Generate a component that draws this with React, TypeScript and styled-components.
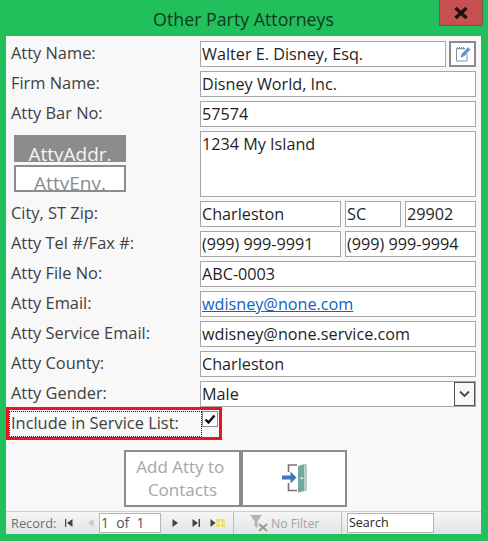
import styled, { createGlobalStyle } from 'styled-components';

const GlobalStyle = createGlobalStyle`
  html, body {
    margin: 0;
    padding: 0;
    background: #22c05c;
  }
  body {
    font-family: 'Open Sans', 'Noto Sans', sans-serif;
  }
`;

const Window = styled('div')`
  width: 488px;
  height: 541px;
  background: #22c05c;
  display: flex;
  flex-direction: column;
  box-sizing: border-box;
  padding: 0 7px 7px 6px;
`;

const TitleBar = styled('div')`
  position: relative;
  height: 36px;
  flex: none;
  display: flex;
  align-items: center;
  justify-content: center;
  padding-top: 2px;
  box-sizing: border-box;
  font-size: 17.8px;
  color: #0e3a1e;
`;

const CloseButton = styled('div')`
  position: absolute;
  top: 0;
  right: -2px;
  width: 44px;
  height: 26px;
  box-sizing: border-box;
  background: #c75050;
  border: 1px solid #6b5a4e;
  border-top: none;
  display: flex;
  align-items: center;
  justify-content: center;
`;

const Body = styled('div')`
  flex: 1;
  background: #f8f8f8;
  display: flex;
  flex-direction: column;
`;

const Form = styled('div')`
  flex: 1;
  display: flex;
  flex-direction: column;
  gap: 4px;
  padding: 5px 5px 0;
`;

const Row = styled('div')<{ $h?: number }>`
  position: relative;
  display: grid;
  grid-template-columns: 189px 1fr;
  height: ${(p) => p.$h ?? 26}px;
`;

const Label = styled('div')`
  font-size: 16.4px;
  line-height: 24px;
  color: #404040;
  white-space: nowrap;
`;

const FieldRow = styled('div')<{ $gap?: number }>`
  display: flex;
  gap: ${(p) => p.$gap ?? 4}px;
  min-width: 0;
`;

const Field = styled('div')<{ $w?: number }>`
  box-sizing: border-box;
  height: 100%;
  flex: ${(p) => (p.$w ? `0 0 ${p.$w}px` : '1')};
  background: #fff;
  border: 1px solid #a6a6a6;
  padding: 0 1px;
  font-size: 16.2px;
  line-height: 24px;
  color: #1f1f1f;
  white-space: nowrap;
  overflow: hidden;
  position: relative;
`;

const MailLink = styled('a')`
  color: #0b63c5;
  text-decoration: underline;
`;

const NoteButton = styled('div')`
  flex: 0 0 27px;
  height: 26px;
  box-sizing: border-box;
  border: 2px solid #8c8c8c;
  background: #fff;
  display: flex;
  align-items: center;
  justify-content: center;
`;

const AddressButtons = styled('div')`
  display: flex;
  flex-direction: column;
  gap: 3px;
  padding: 4px 0 0 3px;
`;

const AddrButton = styled('div')<{ $filled?: boolean }>`
  box-sizing: border-box;
  width: 112px;
  height: 27px;
  overflow: hidden;
  text-align: center;
  font-size: 19px;
  line-height: ${(p) => (p.$filled ? 38 : 33)}px;
  background: ${(p) => (p.$filled ? '#8c8c8c' : '#fff')};
  color: ${(p) => (p.$filled ? '#f4f4f4' : '#8c8c8c')};
  border: ${(p) => (p.$filled ? 'none' : '2px solid #8c8c8c')};
`;

const SelectArrow = styled('div')`
  position: absolute;
  top: 0;
  right: 0;
  width: 21px;
  height: 24px;
  box-sizing: border-box;
  border: 1px solid #555;
  background: #f8f8f8;
  display: flex;
  align-items: center;
  justify-content: center;
`;

const ServiceGrid = styled('div')`
  display: grid;
  grid-template-columns: 191px 1fr;
  grid-column: 1 / -1;
`;

const FocusLabel = styled(Label)`
  margin-left: -2px;
  padding-left: 2px;
  outline: 1px dotted #222;
  outline-offset: -1px;
`;

const CheckBox = styled('div')`
  box-sizing: border-box;
  width: 16px;
  height: 16px;
  border: 1px solid #8c8c8c;
  background: #fff;
  display: flex;
  align-items: center;
  justify-content: center;
`;

const RedMark = styled('div')`
  position: absolute;
  top: -4px;
  left: -5px;
  width: 216px;
  height: 33px;
  box-sizing: border-box;
  border: 3px solid #e8141e;
  pointer-events: none;
`;

const ActionBar = styled('div')`
  display: flex;
  padding: 0 0 4px 118px;
  flex: none;
`;

const ActionButton = styled('div')<{ $w: number }>`
  box-sizing: border-box;
  width: ${(p) => p.$w}px;
  height: 57px;
  border: 2px solid #8c8c8c;
  background: #fff;
  color: #a6a6a6;
  font-size: 17px;
  line-height: 23px;
  text-align: center;
  display: flex;
  align-items: center;
  justify-content: center;
  padding-bottom: 2px;
`;

const NavBar = styled('div')`
  flex: none;
  height: 23px;
  box-sizing: border-box;
  border-top: 1px solid #cfcfcf;
  background: linear-gradient(#f6f6f6, #e2e3e5);
  display: flex;
  align-items: center;
  font-size: 12.8px;
  color: #6e6e6e;
`;

const RecordLabel = styled('span')`
  margin-left: 5px;
  width: 54px;
`;

const NavIcon = styled('svg')<{ $left?: number; $right?: number }>`
  flex: none;
  margin-left: ${(p) => p.$left ?? 0}px;
  margin-right: ${(p) => p.$right ?? 0}px;
`;

const NavInput = styled('div')<{ $w: number; $left?: number }>`
  box-sizing: border-box;
  width: ${(p) => p.$w}px;
  height: 20px;
  margin-left: ${(p) => p.$left ?? 0}px;
  background: #fff;
  border: 1px solid #b5b5b5;
  font-size: 12.5px;
  line-height: 18px;
  padding-left: 1px;
  color: #222;
  flex: none;
`;

const RecordInput = styled(NavInput)`
  font-size: 14px;
  word-spacing: 3.5px;
  color: #555;
`;

const FilterCell = styled('div')`
  display: flex;
  align-items: center;
  width: 109px;
  height: 100%;
  margin-left: 7px;
  border-left: 1px solid #bdbdbd;
  border-right: 1px solid #bdbdbd;
  padding-left: 15px;
  box-sizing: border-box;
  font-size: 12.2px;
  color: #a3a3a3;
  gap: 2px;
`;

const App = () => (
  <Window>
    <GlobalStyle />
    <TitleBar>
      Other Party Attorneys
      <CloseButton>
        <svg width="14" height="12" viewBox="0 0 14 12">
          <path d="M1.5 1 L12.5 11 M12.5 1 L1.5 11" stroke="#1a1410" strokeWidth="3.4" fill="none" />
        </svg>
      </CloseButton>
    </TitleBar>
    <Body>
      <Form>
        <Row>
          <Label>Atty Name:</Label>
          <FieldRow $gap={3}>
            <Field>Walter E. Disney, Esq.</Field>
            <NoteButton>
              <svg width="18" height="18" viewBox="0 0 18 18">
                <path d="M2.5 3.5 H11 M2.5 3.5 V16 H13 V9" stroke="#8a8f96" fill="none" />
                <path d="M3.5 2 V4.5 M5.5 2 V4.5 M7.5 2 V4.5 M9.5 2 V4.5" stroke="#8a8f96" />
                <path d="M7 12 L8 9 L14 2.5 L16 4.5 L10 11 Z" fill="#5b9bd5" stroke="#3f7fb8" strokeWidth="0.6" />
              </svg>
            </NoteButton>
          </FieldRow>
        </Row>
        <Row>
          <Label>Firm Name:</Label>
          <Field>Disney World, Inc.</Field>
        </Row>
        <Row>
          <Label>Atty Bar No:</Label>
          <Field>57574</Field>
        </Row>
        <Row $h={66}>
          <AddressButtons>
            <AddrButton $filled>AttyAddr.</AddrButton>
            <AddrButton>AttyEnv.</AddrButton>
          </AddressButtons>
          <Field>1234 My Island</Field>
        </Row>
        <Row>
          <Label>City, ST Zip:</Label>
          <FieldRow>
            <Field $w={141}>Charleston</Field>
            <Field $w={56}>SC</Field>
            <Field>29902</Field>
          </FieldRow>
        </Row>
        <Row>
          <Label>Atty Tel #/Fax #:</Label>
          <FieldRow>
            <Field $w={141}>(999) 999-9991</Field>
            <Field>(999) 999-9994</Field>
          </FieldRow>
        </Row>
        <Row>
          <Label>Atty File No:</Label>
          <Field>ABC-0003</Field>
        </Row>
        <Row>
          <Label>Atty Email:</Label>
          <Field>
            <MailLink>wdisney@none.com</MailLink>
          </Field>
        </Row>
        <Row>
          <Label>Atty Service Email:</Label>
          <Field>wdisney@none.service.com</Field>
        </Row>
        <Row>
          <Label>Atty County:</Label>
          <Field>Charleston</Field>
        </Row>
        <Row>
          <Label>Atty Gender:</Label>
          <Field>
            Male
            <SelectArrow>
              <svg width="11" height="8" viewBox="0 0 11 8">
                <path d="M1 1.5 L5.5 6 L10 1.5" stroke="#444" strokeWidth="1.8" fill="none" />
              </svg>
            </SelectArrow>
          </Field>
        </Row>
        <Row>
          <ServiceGrid>
            <FocusLabel>Include in Service List:</FocusLabel>
            <CheckBox>
              <svg width="12" height="11" viewBox="0 0 12 11">
                <path d="M1.5 5.5 L4.5 8.5 L10.5 1.5" stroke="#111" strokeWidth="2.4" fill="none" />
              </svg>
            </CheckBox>
          </ServiceGrid>
          <RedMark />
        </Row>
      </Form>
      <ActionBar>
        <ActionButton $w={117}>
          Add Atty to&nbsp;
          <br />
          Contacts
        </ActionButton>
        <ActionButton $w={106}>
          <svg width="26" height="30" viewBox="0 0 26 30">
            <path d="M16 2 H7.5 V9 M7.5 20 V27.5 H16" stroke="#7a6f78" strokeWidth="1.6" fill="none" />
            <path d="M24 1.5 L25 2 V27 L24 27.5" stroke="#7a8f88" strokeWidth="1" fill="none" />
            <path d="M17 3 L23.5 1 V28 L17 29.5 Z" fill="#74a898" />
            <rect x="19.5" y="14.5" width="2.5" height="1.5" fill="#f0f6f4" />
            <path d="M1 12.5 H9.5 V8.5 L15.5 14.5 L9.5 20.5 V16.5 H1 Z" fill="#3f77b5" />
          </svg>
        </ActionButton>
      </ActionBar>
      <NavBar>
        <RecordLabel>Record:</RecordLabel>
        <NavIcon $right={15} width="8" height="10" viewBox="0 0 8 10">
          <path d="M0.5 1 V9" stroke="#444" strokeWidth="1.4" />
          <path d="M7.5 1 V9 L2 5 Z" fill="#444" />
        </NavIcon>
        <NavIcon $right={5} width="6" height="10" viewBox="0 0 6 10">
          <path d="M5.5 1 V9 L0 5 Z" fill="#c8c8c8" />
        </NavIcon>
        <RecordInput $w={62}>1 of 1</RecordInput>
        <NavIcon $left={11} $right={14} width="6" height="10" viewBox="0 0 6 10">
          <path d="M0.5 1 V9 L6 5 Z" fill="#444" />
        </NavIcon>
        <NavIcon $right={10} width="8" height="10" viewBox="0 0 8 10">
          <path d="M0.5 1 V9 L6 5 Z" fill="#444" />
          <path d="M7.3 1 V9" stroke="#444" strokeWidth="1.4" />
        </NavIcon>
        <NavIcon width="16" height="10" viewBox="0 0 16 10">
          <path d="M0.5 1 V9 L5.5 5 Z" fill="#444" />
          <rect x="6" y="1" width="9" height="8" fill="#f0dc6a" />
          <path d="M6 5 H15 M10.5 1 V9" stroke="#fff6c0" />
        </NavIcon>
        <FilterCell>
          <svg width="20" height="18" viewBox="0 0 20 18">
            <path d="M1 1 H13 L8.5 7 V14 L5.5 12 V7 Z" fill="#b4b4b4" />
            <path d="M10 10 L18 17 M18 10 L10 17" stroke="#9a9a9a" strokeWidth="2" />
          </svg>
          No Filter
        </FilterCell>
        <NavInput $w={87} $left={5}>Search</NavInput>
      </NavBar>
    </Body>
  </Window>
);

export default App;
